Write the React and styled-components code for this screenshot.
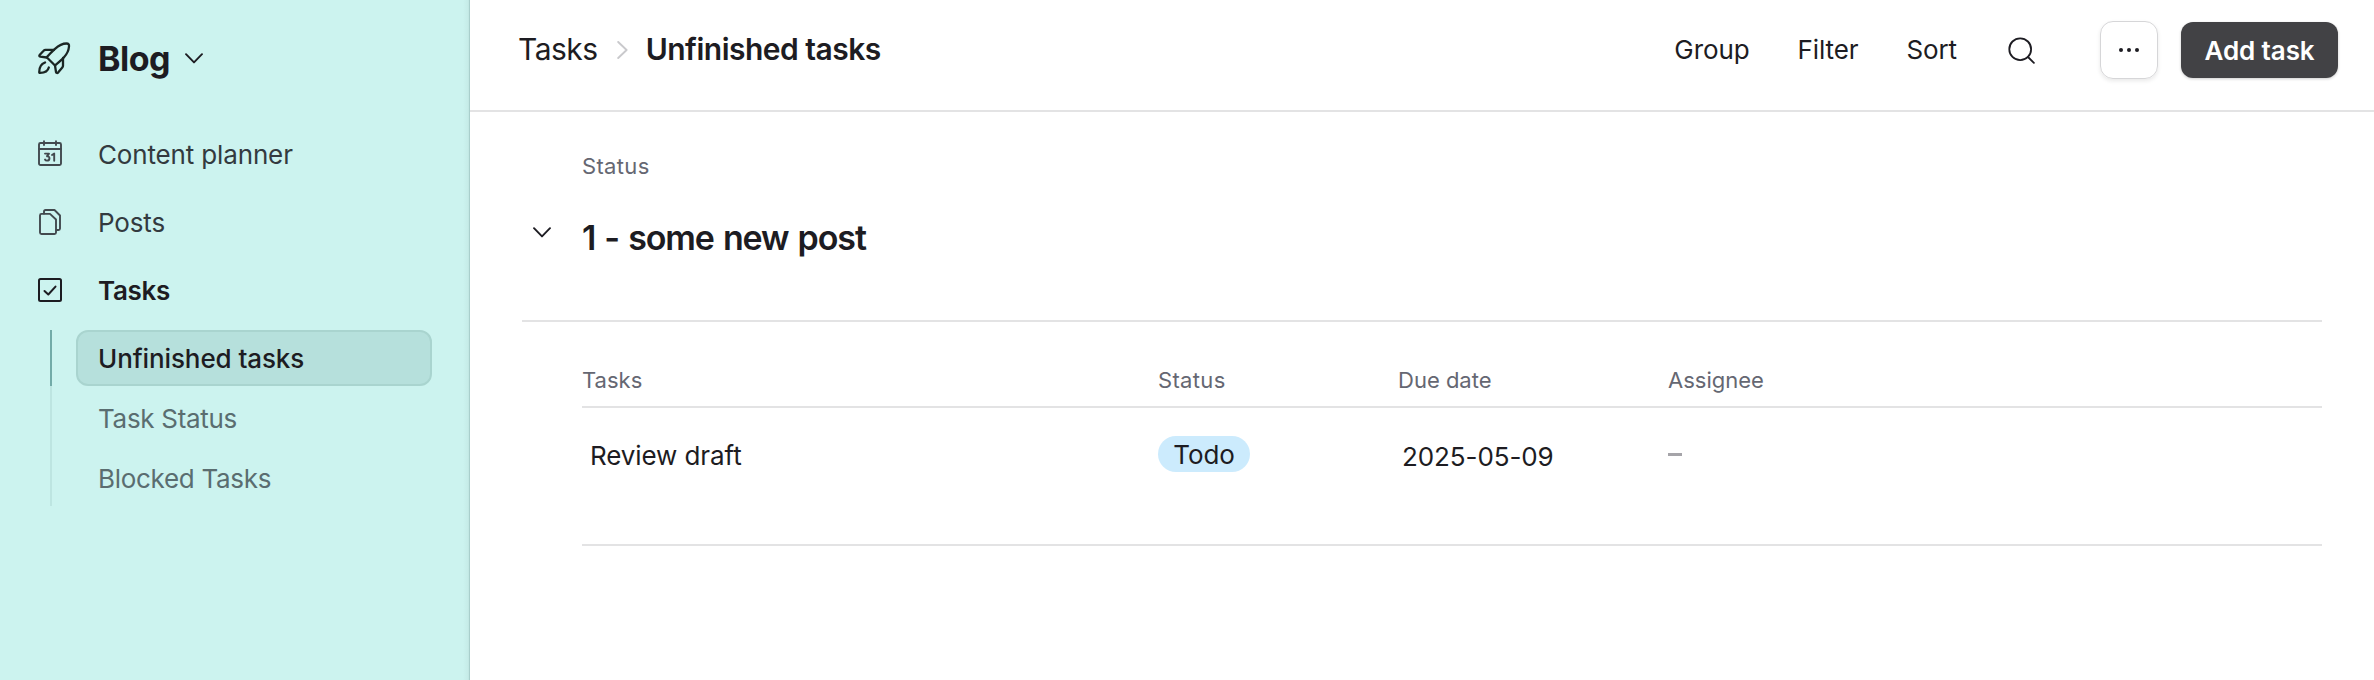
import React from 'react';
import styled, { createGlobalStyle, css } from 'styled-components';

const Global = createGlobalStyle`
  * { box-sizing: border-box; }
  body { margin: 0; background: #fff; font-family: Inter, "Liberation Sans", sans-serif; color: #1d1c22; }
  h1, h2, p { margin: 0; }
`;

const Page = styled.div`
  display: flex;
  width: 100%;
  height: 680px;
  overflow: hidden;
`;

const Sidebar = styled.aside`
  flex: none;
  width: 470px;
  height: 680px;
  padding: 28px 38px 0;
  background: linear-gradient(to right, #ccf3ef 0, #ccf3ef 463px, #c6ece8 468px, #bfe4e0 469px, #a9cfcc 469px, #a9cfcc 470px);
`;

const Brand = styled.div`
  display: flex;
  align-items: center;
  height: 60px;
`;

const IconSlot = styled.span`
  display: flex;
  flex: none;
  width: 60px;
`;

const BrandName = styled.h1`
  font-size: 34px;
  line-height: 60px;
  font-weight: 700;
  letter-spacing: -0.5px;
  margin-right: 15px;
  padding-top: 1px;
`;

const Nav = styled.nav`
  display: flex;
  flex-direction: column;
  padding-top: 32px;
`;

const NavItem = styled.div`
  display: flex;
  align-items: center;
  height: 68px;
  font-size: 26px;
  font-weight: ${(p) => (p.$active ? 600 : 400)};
  color: ${(p) => (p.$active ? '#1d1c22' : '#333a3f')};
  letter-spacing: ${(p) => (p.$active ? -0.3 : -0.15)}px;
`;

const SubList = styled.div`
  display: flex;
  flex-direction: column;
  margin: 6px 0 0 12px;
`;

const SubItem = styled.div`
  display: flex;
  align-items: flex-end;
  height: ${(p) => (p.$active ? 56 : 60)}px;
  padding-left: 24px;
  border-left: 2px solid ${(p) => (p.$active ? '#73aba8' : '#bde5e1')};
`;

const SubLabel = styled.div`
  display: flex;
  align-items: center;
  width: 356px;
  height: 56px;
  padding-left: 20px;
  border: 2px solid transparent;
  border-radius: 12px;
  font-size: 26px;
  letter-spacing: -0.3px;
  color: #5a6d70;
  ${(p) => p.$active && css`
    color: #1d1c22;
    font-weight: 500;
    letter-spacing: -0.1px;
    background: #b6e0dc;
    border-color: #a9d4cf;
  `}
`;

const Main = styled.main`
  flex: 1;
  min-width: 0;
`;

const Header = styled.header`
  display: flex;
  align-items: flex-start;
  justify-content: space-between;
  height: 112px;
  padding: 20px 36px 0 48px;
  border-bottom: 2px solid #e3e3e4;
`;

const Crumbs = styled.div`
  display: flex;
  align-items: center;
  height: 60px;
  font-size: 30px;
  letter-spacing: -0.5px;
`;

const Crumb = styled.span`
  font-weight: ${(p) => (p.$current ? 600 : 400)};
  padding-bottom: 2px;
`;

const Separator = styled.span`
  display: flex;
  margin: 0 18px 0 19px;
`;

const Actions = styled.div`
  display: flex;
  align-items: center;
  height: 60px;
`;

const TextAction = styled.span`
  font-size: 26px;
  letter-spacing: -0.1px;
  margin-right: 48px;
  padding-bottom: 1px;
`;

const SearchAction = styled.span`
  display: flex;
  margin: 0 65px 0 3px;
`;

const MoreButton = styled.span`
  display: flex;
  align-items: center;
  justify-content: center;
  width: 58px;
  height: 58px;
  margin-right: 23px;
  border: 1px solid #d6d6d8;
  border-radius: 13px;
  box-shadow: 0 2px 4px rgba(0, 0, 0, 0.09);
`;

const PrimaryButton = styled.span`
  display: flex;
  align-items: center;
  justify-content: center;
  width: 157px;
  height: 56px;
  padding-top: 1px;
  border-radius: 12px;
  background: #424245;
  color: #fff;
  font-size: 26px;
  font-weight: 600;
  letter-spacing: -0.1px;
  box-shadow: 0 1px 3px rgba(0, 0, 0, 0.2);
`;

const Content = styled.section`
  padding: 0 52px;
`;

const GroupHeader = styled.div`
  display: flex;
  flex-direction: column;
  height: 210px;
  padding-top: 38px;
  border-bottom: 2px solid #e3e3e4;
`;

const FieldLabel = styled.div`
  font-size: 22px;
  line-height: 32px;
  letter-spacing: ${(p) => (p.$tight ? 0 : 0.35)}px;
  color: #656772;
  ${(p) => p.$indent && css`padding-left: 60px;`}
`;

const GroupTitle = styled.div`
  display: flex;
  align-items: center;
  margin-top: 24px;
  height: 64px;
`;

const Toggle = styled.span`
  display: flex;
  width: 60px;
  padding: 0 0 12px 11px;
`;

const Title = styled.h2`
  font-size: 34px;
  font-weight: 600;
  letter-spacing: -1.1px;
  word-spacing: 1.6px;
  padding-bottom: 2px;
`;

const Table = styled.div`
  margin-left: 60px;
  padding-top: 40px;
`;

const Row = styled.div`
  display: grid;
  grid-template-columns: 576px 240px 270px 1fr;
  border-bottom: 2px solid #e3e3e4;
`;

const HeadRow = styled(Row)`
  height: 46px;
  padding-top: 2px;
`;

const BodyRow = styled(Row)`
  height: 138px;
  padding-top: 28px;
`;

const Cell = styled.div`
  font-size: 26px;
  line-height: 40px;
  letter-spacing: -0.1px;
  padding-left: ${(p) => p.$pad || 0}px;
  padding-top: ${(p) => p.$top || 0}px;
`;

const Badge = styled.span`
  display: flex;
  align-items: center;
  justify-content: center;
  width: 92px;
  height: 36px;
  padding-top: 1px;
  border-radius: 18px;
  background: #ccebfd;
`;

const Dash = styled.div`
  width: 14px;
  height: 3px;
  margin-top: 17px;
  background: #a5a4a9;
`;

const stroke = { fill: 'none', strokeLinecap: 'round', strokeLinejoin: 'round' };

const RocketIcon = () => (
  <svg width="33" height="33" viewBox="0 0 33 33" stroke="#1b2624" strokeWidth="2.3" {...stroke}>
    <path d="M8.700 15.300C12 11.500 14.500 9 17 6.800C20.500 3.600 24.500 1.500 28.500 1.500C30.500 1.500 31.200 2.400 31 4.500C30.700 8.500 29 12 26 15.200C23.500 18 20.500 20.500 17 23.500Z" />
    <path d="M16 7.800H7.500Q6.400 7.800 5.600 8.700L1.600 13Q.8 14.300 2.300 14.700L8.700 15.500" />
    <path d="M25 16V23.800Q25 24.800 24.300 25.600L20.300 30.300Q18.700 31.800 18 30L17 23.500" />
    <path d="M7 20.500C3 22 1 25 1.300 30.800C6.500 31 9.800 29.500 10.800 25.500" />
  </svg>
);

const CalendarIcon = () => (
  <svg width="24" height="28" viewBox="0 0 24 28" stroke="#42494e" strokeWidth="1.9" {...stroke}>
    <rect x="1" y="3" width="22" height="22" rx="1.5" />
    <path d="M1 9H23M6 1.200V5M18 1.200V5" />
    <path d="M7 13.600H11L9 16.200C12.500 16 12 20.600 9 20.600Q7.500 20.600 7 19.500M14 15L16.200 13.600V20.800" />
  </svg>
);

const PagesIcon = () => (
  <svg width="24" height="26" viewBox="0 0 24 26" stroke="#42494e" strokeWidth="1.9" {...stroke}>
    <path d="M3.500 4.900H12L18 10.500V23.500Q18 25 16.500 25H3.500Q2 25 2 23.500V6.400Q2 4.900 3.500 4.900Z" />
    <path d="M6 4.500V2.500Q6 1 7.500 1H16.500L22 6.500V19.500Q22 21 20.500 21H18.500" />
  </svg>
);

const CheckIcon = () => (
  <svg width="24" height="24" viewBox="0 0 24 24" stroke="#1d1c22" strokeWidth="2" {...stroke}>
    <rect x="1" y="1" width="22" height="22" rx="1.5" />
    <path d="M6.500 13L10.300 16.500L17.500 8.600" />
  </svg>
);

const ChevronDown = () => (
  <svg width="18" height="11" viewBox="0 0 18 11" stroke="#1d1c22" strokeWidth="1.9" {...stroke}>
    <path d="M1 1.200L9 9.400L17 1.200" />
  </svg>
);

const ChevronRight = () => (
  <svg width="11" height="18" viewBox="0 0 11 18" stroke="#c9c9cc" strokeWidth="1.9" {...stroke}>
    <path d="M1.200 1L9.600 9L1.200 17" />
  </svg>
);

const SearchIcon = () => (
  <svg width="27" height="27" viewBox="0 0 27 27" stroke="#1d1c22" strokeWidth="1.8" {...stroke}>
    <circle cx="12.200" cy="12.200" r="10.900" />
    <path d="M20 20L25.900 25.900" />
  </svg>
);

const DotsIcon = () => (
  <svg width="22" height="6" viewBox="0 0 22 6" fill="#1d1c22">
    <circle cx="3" cy="3" r="2" />
    <circle cx="11" cy="3" r="2" />
    <circle cx="19" cy="3" r="2" />
  </svg>
);

export default function App() {
  return (
    <Page>
      <Global />
      <Sidebar>
        <Brand>
          <IconSlot><RocketIcon /></IconSlot>
          <BrandName>Blog</BrandName>
          <ChevronDown />
        </Brand>
        <Nav>
          <NavItem><IconSlot><CalendarIcon /></IconSlot>Content planner</NavItem>
          <NavItem><IconSlot><PagesIcon /></IconSlot>Posts</NavItem>
          <NavItem $active><IconSlot><CheckIcon /></IconSlot>Tasks</NavItem>
          <SubList>
            <SubItem $active><SubLabel $active>Unfinished tasks</SubLabel></SubItem>
            <SubItem><SubLabel>Task Status</SubLabel></SubItem>
            <SubItem><SubLabel>Blocked Tasks</SubLabel></SubItem>
          </SubList>
        </Nav>
      </Sidebar>
      <Main>
        <Header>
          <Crumbs>
            <Crumb>Tasks</Crumb>
            <Separator><ChevronRight /></Separator>
            <Crumb $current>Unfinished tasks</Crumb>
          </Crumbs>
          <Actions>
            <TextAction>Group</TextAction>
            <TextAction>Filter</TextAction>
            <TextAction>Sort</TextAction>
            <SearchAction><SearchIcon /></SearchAction>
            <MoreButton><DotsIcon /></MoreButton>
            <PrimaryButton>Add task</PrimaryButton>
          </Actions>
        </Header>
        <Content>
          <GroupHeader>
            <FieldLabel $indent>Status</FieldLabel>
            <GroupTitle>
              <Toggle><ChevronDown /></Toggle>
              <Title>1 - some new post</Title>
            </GroupTitle>
          </GroupHeader>
          <Table>
            <HeadRow>
              <FieldLabel $tight>Tasks</FieldLabel>
              <FieldLabel>Status</FieldLabel>
              <FieldLabel $tight>Due date</FieldLabel>
              <FieldLabel $tight>Assignee</FieldLabel>
            </HeadRow>
            <BodyRow>
              <Cell $pad={8}>Review draft</Cell>
              <Cell><Badge>Todo</Badge></Cell>
              <Cell $pad={4} $top={1}>2025-05-09</Cell>
              <Cell><Dash /></Cell>
            </BodyRow>
          </Table>
        </Content>
      </Main>
    </Page>
  );
}
